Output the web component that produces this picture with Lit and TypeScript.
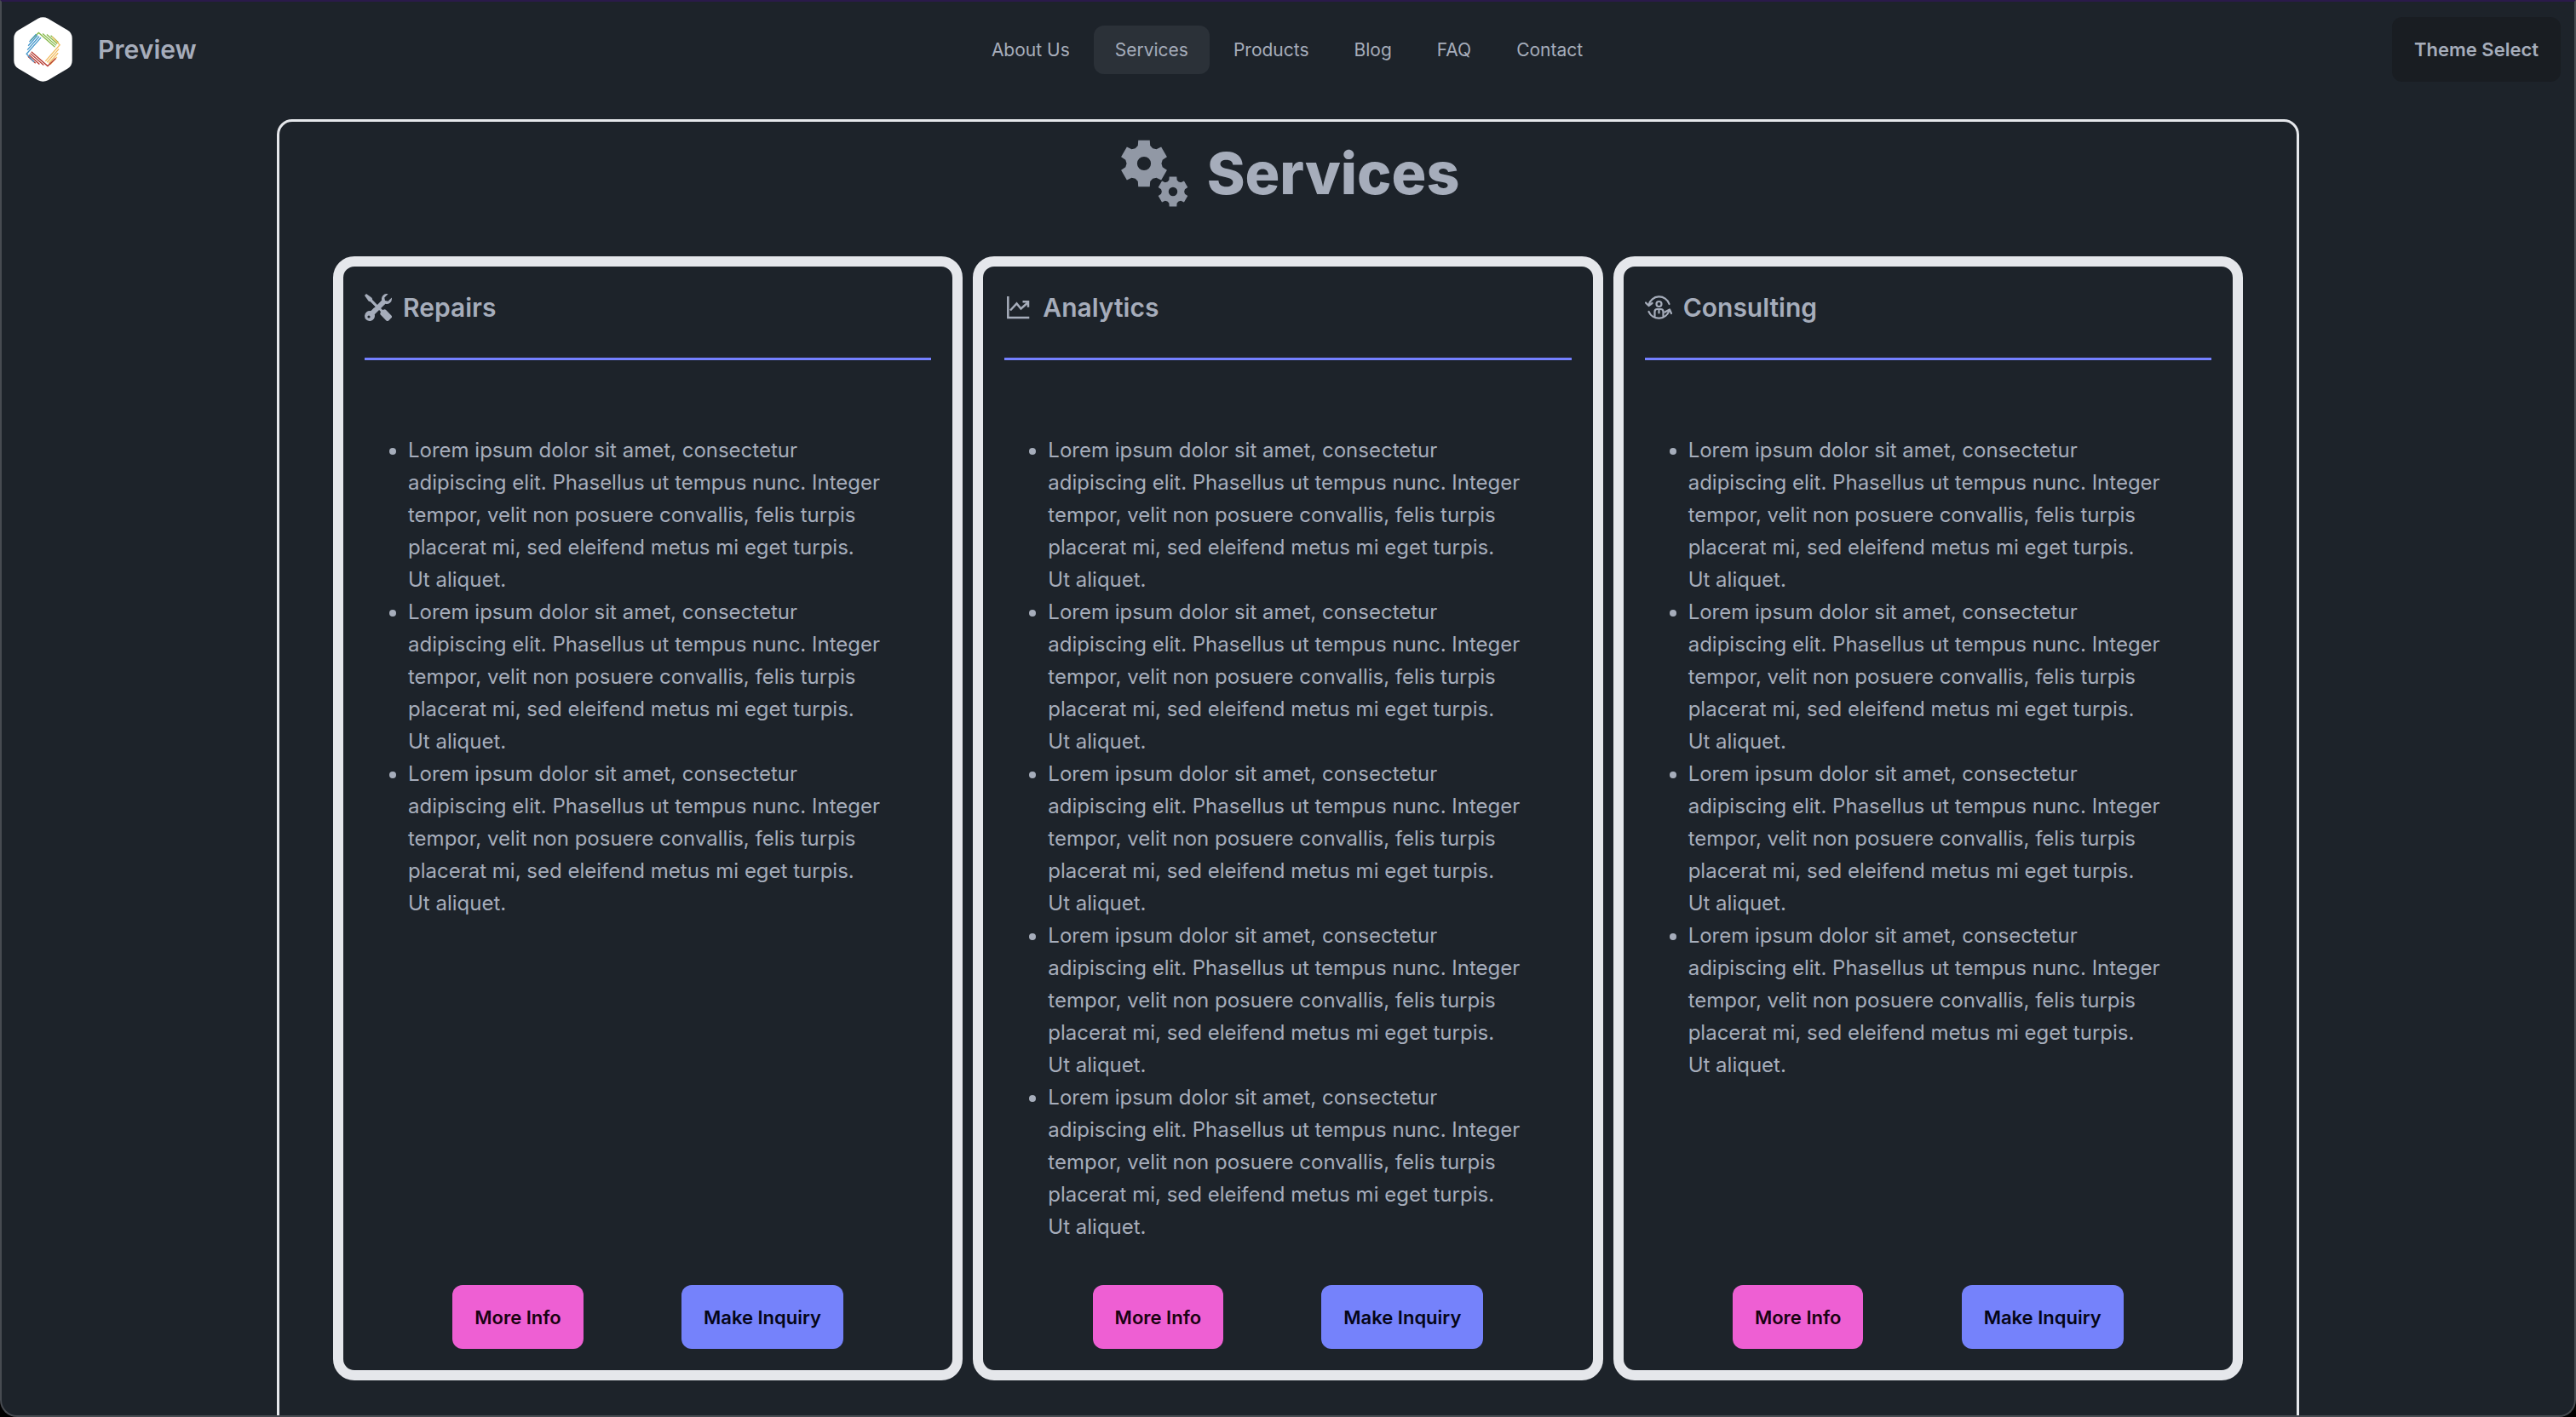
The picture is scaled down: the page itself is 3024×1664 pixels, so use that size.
import { LitElement, html, css, svg } from "lit";
import { customElement } from "lit/decorators.js";

// The last sentence is kept on one line by its no-break space.
const LOREM =
  "Lorem ipsum dolor sit amet, consectetur adipiscing elit. Phasellus ut tempus nunc. Integer tempor, velit non posuere convallis, felis turpis placerat mi, sed eleifend metus mi eget turpis. Ut\u00a0aliquet.";

const NAV = ["About Us", "Services", "Products", "Blog", "FAQ", "Contact"];

// Six-toothed cog centred on (cx, cy); r is the outer radius.
const cog = (cx: number, cy: number, r: number) => {
  const pts: string[] = [];
  const at = (deg: number, rad: number) => {
    const a = (deg * Math.PI) / 180;
    return `${(cx + rad * Math.sin(a)).toFixed(2)} ${(cy - rad * Math.cos(a)).toFixed(2)}`;
  };
  for (let i = 0; i < 6; i++) {
    const d = i * 60;
    pts.push(at(d - 19, r * 0.79), at(d - 14, r), at(d + 14, r), at(d + 19, r * 0.79), at(d + 30, r * 0.73));
  }
  const h = r * 0.29;
  return `M${pts.join("L")}ZM${cx - h} ${cy}a${h} ${h} 0 1 0 ${2 * h} 0a${h} ${h} 0 1 0 ${-2 * h} 0Z`;
};

// The logo mark: one bundle of strokes per side, turned a quarter each time.
const LOGO_SIDES = [
  { color: "#86b94a", turn: 0 },
  { color: "#f2bd62", turn: 90 },
  { color: "#b63a30", turn: 180 },
  { color: "#4497cb", turn: 270 },
];

const toolsIcon = svg`
  <path fill="currentColor" fill-rule="evenodd" d="M1 0 0 1l2.200 3.081a1 1 0 0 0 .815.419h.070a1 1 0 0 1 .708.293l2.675 2.675-2.617 2.654A3.003 3.003 0 0 0 0 13a3 3 0 1 0 5.878-.851l2.654-2.617.968.968-.305.914a1 1 0 0 0 .242 1.023l3.270 3.270a.997.997 0 0 0 1.414 0l1.586-1.586a.997.997 0 0 0 0-1.414l-3.270-3.270a1 1 0 0 0-1.023-.242L10.500 9.500l-.960-.960 2.680-2.643A3.005 3.005 0 0 0 16 3q0-.405-.102-.777l-2.140 2.141L12 4l-.364-1.757L13.777.102a3 3 0 0 0-3.675 3.680L7.462 6.460 4.793 3.793a1 1 0 0 1-.293-.707v-.071a1 1 0 0 0-.419-.814zM2.500 12.700a.8.8 0 1 0 0 1.600.8.8 0 0 0 0-1.600z"/>
  <path fill="none" stroke="currentColor" stroke-linejoin="round" d="m1 1 2 2.500 4.500 4.500M9.500 9.500l1.500 1.500 3.500 3.500M2.500 12l3.500-3.500"/>`;

const chartIcon = svg`
  <g fill="none" stroke="currentColor" stroke-width="2.500">
    <path d="M4.300 3v25h25"/>
    <path d="m7 19.500 7.500-8 5 6L28 10"/>
    <path d="M21.500 9.300h6.500v6.500"/>
  </g>`;

const consultIcon = svg`
  <g fill="none" stroke="currentColor" stroke-width="2.200" stroke-linecap="round" stroke-linejoin="round">
    <path d="M4.500 13A12.500 12.500 0 0 1 28.500 12"/>
    <path d="M1 10.500l3.500 3.500 4-3"/>
    <path d="M28.500 19.500A12.800 12.800 0 0 1 4.500 21"/>
    <path d="M23.500 21.500l5.500-3 2 4.500"/>
    <circle cx="16.500" cy="12" r="3"/>
    <path d="M11.500 26.500V21a3 3 0 0 1 3-3h4a3 3 0 0 1 3 3v5.500"/>
    <path d="M16.500 18.500v4"/>
  </g>`;

const SERVICES = [
  { title: "Repairs", icon: toolsIcon, box: "0 0 16 16", items: 3 },
  { title: "Analytics", icon: chartIcon, box: "0 0 32 32", items: 5 },
  { title: "Consulting", icon: consultIcon, box: "0 0 32 32", items: 4 },
];

@customElement("service-card")
class ServiceCard extends LitElement {
  static properties = { service: { attribute: false } };
  declare service: (typeof SERVICES)[number];

  static styles = css`
    :host {
      display: flex;
      flex-direction: column;
      box-sizing: border-box;
      border: 12px solid #e5e7eb;
      border-radius: 25px;
      padding: 25px;
    }
    .title {
      display: flex;
      align-items: center;
      gap: 13px;
      margin: 0;
      padding: 3px 0 39px;
      font-size: 30px;
      line-height: 40px;
      font-weight: 600;
      border-bottom: 3px solid #7480ff;
    }
    .icon {
      width: 32px;
      height: 32px;
      flex: none;
    }
    .list {
      flex: 1;
      margin: 0;
      padding: 87px 50px 49px 51px;
      font-size: 24px;
      line-height: 38px;
    }
    .actions {
      display: flex;
      justify-content: space-evenly;
      gap: 12px;
    }
    .btn {
      height: 75px;
      padding: 0 26px;
      border: 0;
      border-radius: 12px;
      font: 600 22px Inter, sans-serif;
      cursor: pointer;
    }
    .info {
      background: #ee5fd3;
      color: #190211;
    }
    .inquiry {
      background: #7582fb;
      color: #050617;
    }
  `;

  render() {
    const s = this.service;
    return html`
      <h2 class="title">
        <svg class="icon" viewBox=${s.box} aria-hidden="true">${s.icon}</svg>
        ${s.title}
      </h2>
      <ul class="list">
        ${Array.from({ length: s.items }, () => html`<li>${LOREM}</li>`)}
      </ul>
      <div class="actions">
        <button class="btn info" type="button">More Info</button>
        <button class="btn inquiry" type="button">Make Inquiry</button>
      </div>
    `;
  }
}

@customElement("app-root")
class AppRoot extends LitElement {
  static styles = css`
    :host {
      display: block;
      height: 100vh;
      background: #000;
      color: #a6adbb;
      font-family: Inter, "Liberation Sans", sans-serif;
    }
    .window {
      box-sizing: border-box;
      height: 100%;
      overflow: hidden;
      background: #1d232a;
      border: 2px solid #474b51;
      border-top-color: #2a1a4a;
      border-radius: 0 0 20px 20px;
    }
    .bar {
      display: grid;
      grid-template-columns: 1fr auto 1fr;
      align-items: center;
      padding: 18px 16px 0 14px;
    }
    .brand {
      display: flex;
      align-items: center;
      gap: 30px;
      font-size: 30px;
      line-height: 40px;
      font-weight: 600;
      color: inherit;
      text-decoration: none;
    }
    .logo {
      width: 69px;
      height: 76px;
    }
    .nav {
      display: flex;
      gap: 3px;
      font-size: 21px;
      line-height: 31px;
    }
    .link {
      padding: 13px 25px;
      border-radius: 12px;
      color: inherit;
      text-decoration: none;
    }
    .link.active {
      background: #2b3138;
    }
    .theme {
      justify-self: end;
      height: 76px;
      padding: 0 26px;
      border: 0;
      border-radius: 12px;
      background: #191d22;
      color: inherit;
      font: 600 22px Inter, sans-serif;
      cursor: pointer;
    }
    .panel {
      margin: 44px 323px 0;
      padding: 12px 63px 100px;
      border: 3px solid #e5e7eb;
      border-radius: 18px;
    }
    .heading {
      display: flex;
      align-items: center;
      justify-content: center;
      gap: 18px;
      margin: 0 0 50px;
      font-size: 68px;
      line-height: 96px;
      font-weight: 800;
    }
    .gears {
      width: 88px;
      height: 88px;
      opacity: 0.85;
    }
    .cards {
      display: grid;
      grid-template-columns: repeat(3, 1fr);
      gap: 12px;
    }
  `;

  render() {
    return html`
      <div class="window">
        <header class="bar">
          <a class="brand" href="#">
            <svg class="logo" viewBox="0 0 207 230" aria-hidden="true">
              <path
                fill="#fff"
                d="M86 5Q103-4 121 5L190 46Q207 56 207 75V155Q207 174 190 184L121 225Q103 234 86 225L17 184Q0 174 0 155V75Q0 56 17 46Z"
              />
              <g fill="none" stroke-width="4">
                ${LOGO_SIDES.map(
                  (s) => svg`<path
                    stroke=${s.color}
                    transform="translate(104 115) rotate(${s.turn})"
                    d="M-45-32-16-59 42-8M-2-56 46-14M13-53 50-20M27-49 54-25"
                  />`
                )}
              </g>
            </svg>
            Preview
          </a>
          <nav class="nav">
            ${NAV.map((n) => html`<a class=${n === "Services" ? "link active" : "link"} href="#">${n}</a>`)}
          </nav>
          <button class="theme" type="button">Theme Select</button>
        </header>
        <main class="panel">
          <h1 class="heading">
            <svg class="gears" viewBox="0 0 88 88" aria-hidden="true">
              <path fill="currentColor" fill-rule="evenodd" d=${cog(32, 33, 28)} />
              <path fill="currentColor" fill-rule="evenodd" d=${cog(66, 66, 18)} />
            </svg>
            Services
          </h1>
          <section class="cards">
            ${SERVICES.map((s) => html`<service-card .service=${s}></service-card>`)}
          </section>
        </main>
      </div>
    `;
  }
}
